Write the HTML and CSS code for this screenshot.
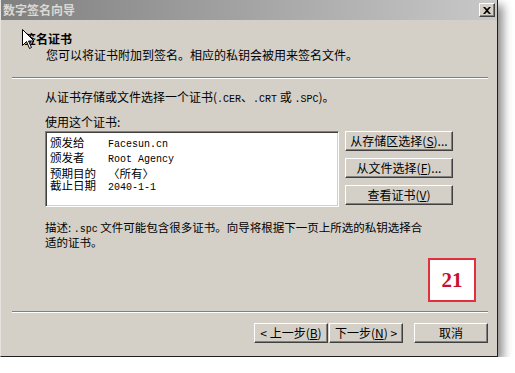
FILE: index.html
```html
<!DOCTYPE html>
<html lang="zh-CN">
<head>
<meta charset="UTF-8">
<title>数字签名向导</title>
<link rel="stylesheet" href="styles.css">
</head>
<body>

<div class="window">
    <div class="titlebar">
        <span class="title">数字签名向导</span>
        <span class="close">
            <svg width="8" height="7" viewBox="0 0 8 7"><path d="M0 0h2l2 2 2-2h2L5 3.5 8 7H6L4 5 2 7H0l3-3.5z" fill="#000"/></svg>
        </span>
    </div>

    <div class="header">
        <div class="head-title">签名证书</div>
        <div class="head-sub">您可以将证书附加到签名。相应的私钥会被用来签名文件。</div>
    </div>

    <div class="sep"></div>

    <div class="content">
        <p class="line">从证书存储或文件选择一个证书(<span class="mono">.CER</span>、<span class="mono">.CRT</span> 或 <span class="mono">.SPC</span>)。</p>
        <p class="line label">使用这个证书:</p>

        <div class="cert-row">
            <div class="listbox">
                <div class="entry"><span class="key">颁发给</span><span class="mono">Facesun.cn</span></div>
                <div class="entry"><span class="key">颁发者</span><span class="mono">Root Agency</span></div>
                <div class="entry"><span class="key">预期目的</span><span>〈所有〉</span></div>
                <div class="entry"><span class="key">截止日期</span><span class="mono">2040-1-1</span></div>
            </div>
            <div class="side-buttons">
                <button class="btn side">从存储区选择(<u>S</u>)...</button>
                <button class="btn side">从文件选择(<u>F</u>)...</button>
                <button class="btn side">查看证书(<u>V</u>)</button>
            </div>
        </div>

        <p class="desc">描述: <span class="mono">.spc</span> 文件可能包含很多证书。向导将根据下一页上所选的私钥选择合<br>适的证书。</p>
    </div>

    <div class="sep"></div>

    <div class="footer">
        <div class="pair">
            <button class="btn step">&lt; 上一步(<u>B</u>)</button>
            <button class="btn step">下一步(<u>N</u>) &gt;</button>
        </div>
        <button class="btn step">取消</button>
    </div>

    <div class="badge">21</div>

    <svg class="cursor" width="12" height="20" viewBox="0 0 12 20">
        <path d="M0.5 0.5v16l4-4 3 7 2-1-3-6.5h5.5z" fill="#fff" stroke="#000"/>
    </svg>
</div>

</body>
</html>
```

FILE: styles.css
```css
body {
    margin: 0;
    background: #fff;
    font-family: "Noto Sans CJK SC", sans-serif;
    font-size: 12px;
    color: #000;
}

.window {
    position: relative;
    width: 498px;
    height: 357px;
    box-sizing: border-box;
    display: flex;
    flex-direction: column;
    background: #d4d0c8;
    border-left: 1px solid #e6e3de;
    border-right: 1px solid #202020;
    border-bottom: 1px solid #202020;
    box-shadow: 5px 5px 9px rgba(0, 0, 0, 0.45);
}

.titlebar {
    height: 20px;
    display: flex;
    align-items: center;
    justify-content: space-between;
    padding: 0 2px 0 2px;
    background: linear-gradient(to right, #808080, #c8c8c8);
}

.title {
    color: #dcd9d3;
    font-weight: bold;
    font-size: 12px;
    line-height: 14px;
}

.close {
    width: 14px;
    height: 12px;
    display: flex;
    align-items: center;
    justify-content: center;
    background: #d4d0c8;
    border: 1px solid;
    border-color: #fff #404040 #404040 #fff;
    box-shadow: inset -1px -1px #808080;
}

.header {
    height: 57px;
    box-sizing: border-box;
    padding: 12px 0 0 23px;
}

.head-title {
    font-weight: bold;
    line-height: 14px;
}

.head-sub {
    margin-top: 2px;
    padding-left: 22px;
    line-height: 14px;
}

.sep {
    margin: 0 9px 0 11px;
    border-top: 1px solid #808080;
    border-bottom: 1px solid #fff;
}

.content {
    flex: 1;
    padding: 11px 0 0 44px;
}

.line {
    margin: 0;
    line-height: 14px;
}

.label {
    margin-top: 8px;
}

.mono {
    font-family: "Liberation Mono", monospace;
    font-size: 10px;
}

.cert-row {
    display: flex;
    gap: 6px;
    margin-top: 2px;
}

.listbox {
    width: 294px;
    height: 76px;
    box-sizing: border-box;
    padding: 4px 0 0 4px;
    background: #fff;
    border: 1px solid;
    border-color: #808080 #fff #fff #808080;
    box-shadow: inset 1px 1px #404040, inset -1px -1px #d4d0c8;
}

.entry {
    display: flex;
    align-items: baseline;
    font-size: 11.5px;
    line-height: 12.4px;
    white-space: nowrap;
}

.key {
    width: 58px;
}

.side-buttons {
    display: flex;
    flex-direction: column;
    gap: 7px;
}

.btn {
    height: 20px;
    padding: 0;
    font-family: "Noto Sans CJK SC", sans-serif;
    font-size: 12px;
    line-height: 14px;
    color: #000;
    background: #d4d0c8;
    border: 1px solid;
    border-color: #fff #404040 #404040 #fff;
    box-shadow: inset -1px -1px #808080;
}

.side {
    width: 108px;
}

.desc {
    margin: 14px 0 0;
    font-size: 11.5px;
    line-height: 12px;
    white-space: nowrap;
}

.footer {
    display: flex;
    justify-content: flex-end;
    gap: 11px;
    padding: 10px 9px 13px 0;
}

.pair {
    display: flex;
    gap: 1px;
}

.step {
    width: 74px;
}

.badge {
    position: absolute;
    left: 427px;
    top: 258px;
    width: 44px;
    height: 40px;
    display: flex;
    align-items: center;
    justify-content: center;
    background: #fff;
    border: 2px solid #e03040;
    color: #c8102e;
    font-family: "Liberation Serif", serif;
    font-weight: bold;
    font-size: 21px;
}

.cursor {
    position: absolute;
    left: 21px;
    top: 29px;
}
```
